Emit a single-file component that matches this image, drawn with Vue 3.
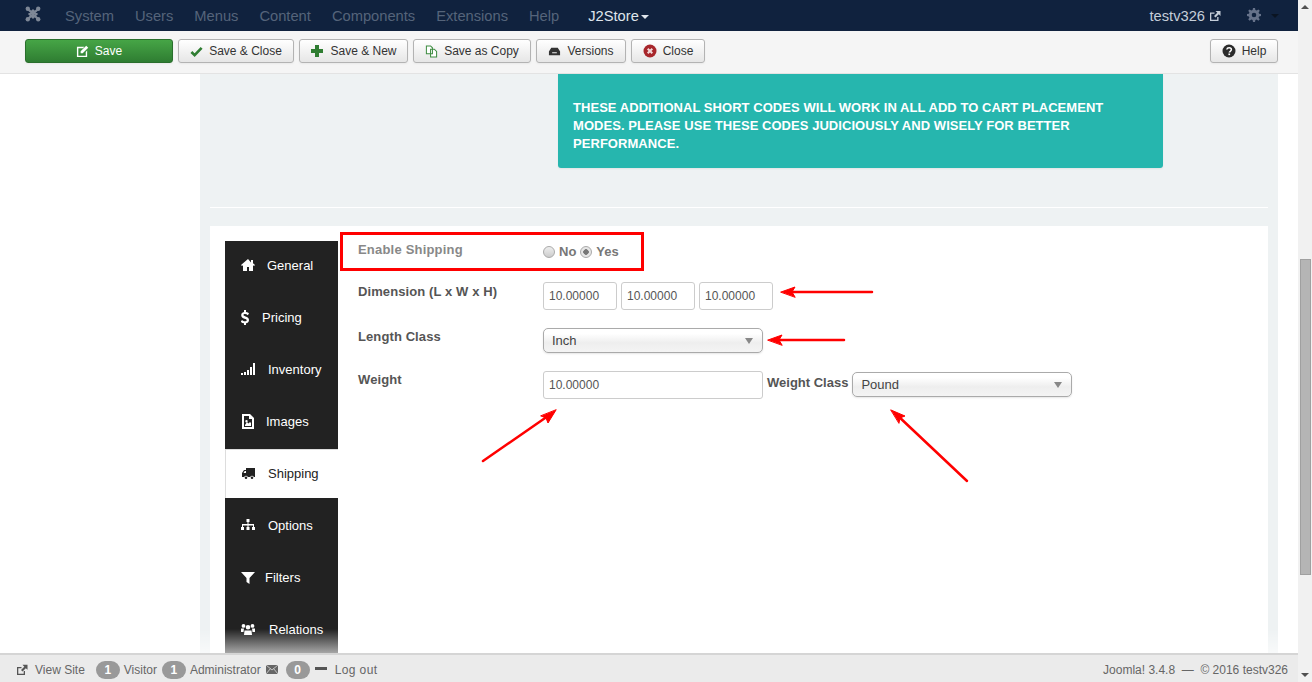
<script setup>
const navItems = ['System', 'Users', 'Menus', 'Content', 'Components', 'Extensions', 'Help'];
const tabs = [
  { label: 'General', icon: 'home', gap: 12 },
  { label: 'Pricing', icon: 'dollar', gap: 7, box: '3 0 14 15' },
  { label: 'Inventory', icon: 'signal', gap: 13 },
  { label: 'Images', icon: 'image', gap: 11 },
  { label: 'Shipping', icon: 'truck', gap: 13, active: true },
  { label: 'Options', icon: 'tree', gap: 13 },
  { label: 'Filters', icon: 'filter', gap: 10 },
  { label: 'Relations', icon: 'users', gap: 14 }
];
const iconPaths = {
  home: 'M7 1 0 7l1 1 1-.8V13h4V9h2v4h4V7.2l1 .8 1-1-2-1.8V2h-2v2.400z',
  dollar: 'M6 0h2v2c1.500.2 2.500.8 3 1.500L9.800 5.200C9 4.400 8 4 7 4c-1 0-1.500.4-1.500 1 0 .7.800 1 2 1.400C9.500 7 11 8 11 10c0 1.800-1.200 3-3 3.300V15H6v-1.700c-1.500-.2-2.700-.9-3.300-1.800l1.300-1.500c.8.800 1.900 1.300 3 1.300 1 0 1.700-.4 1.700-1.100 0-.8-.9-1.100-2.200-1.500C4.600 8.100 3.200 7.200 3.200 5.200 3.200 3.500 4.300 2.300 6 2z',
  signal: 'M0 11h2v2H0zM3 10h2v3H3zM6 8h2v5H6zM9 5h2v8H9zM12 1h2v12h-2z',
  image: 'M1 0h8l4 4v11H1zm2 2v11h8V5H8V2zm1 9 2-3 1.500 1.500L9 8l1 1v3H4zm1.500-5a1.200 1.200 0 1 1 0 2.400 1.200 1.200 0 0 1 0-2.400z',
  truck: 'M5 2h9v9h-1.200a2 2 0 0 0-3.600 0H6.800a2 2 0 0 0-3.600 0H1V7l2-3h2zM2.500 7H5V5H3.700zM5 10.500a1.300 1.300 0 1 1 0 2.600 1.300 1.300 0 0 1 0-2.600zm6 0a1.300 1.300 0 1 1 0 2.600 1.300 1.300 0 0 1 0-2.600z',
  tree: 'M5.500 1h3v3h-1v2H13v3h1v3h-3V9h1V7.500H7.500V9h1v3h-3V9h1V7.500H2V9h1v3H0V9h1V6h5.500V4h-1z',
  filter: 'M0 2h14L8.500 8v6l-3-2V8z',
  users: 'M7 3a2.300 2.300 0 1 1 0 4.600A2.300 2.300 0 0 1 7 3zM2.500 2a1.900 1.900 0 1 1 0 3.800 1.900 1.900 0 0 1 0-3.800zm9 0a1.900 1.900 0 1 1 0 3.800 1.900 1.900 0 0 1 0-3.800zM3.500 8.500h7l.5 4.500H3zM0 6.500h3L2.500 10H0zm11 0h3V10h-2.500z'
};
</script>

<template>
  <div class="page">
    <div class="main">
      <header class="navbar">
        <svg class="joomla" viewBox="0 0 16 16" width="16" height="16">
          <path d="M3 3l10 10M13 3 3 13M8 4.500 4.500 8 8 11.500 11.500 8z" fill="none" stroke="#7d8796" stroke-width="2.200" />
          <circle cx="2.800" cy="2.800" r="2.200" fill="#7d8796" /><circle cx="13.200" cy="2.800" r="2.200" fill="#7d8796" />
          <circle cx="2.800" cy="13.200" r="2.200" fill="#7d8796" /><circle cx="13.200" cy="13.200" r="2.200" fill="#7d8796" />
        </svg>
        <nav class="nav-items">
          <a v-for="item in navItems" :key="item">{{ item }}</a>
        </nav>
        <a class="nav-j2">J2Store<i class="caret"></i></a>
        <span class="nav-site">testv326
          <svg viewBox="0 0 12 12" width="12" height="12"><path d="M1 2.500h4.500v1.300H2.300v5.900h5.900V7h1.300v4H1zM6.500 1H11.500v5L9.800 4.300 6.500 7.600 5 6.100l3.300-3.300z" fill="#c5ced9" /></svg>
        </span>
        <svg class="gear" viewBox="0 0 14 14" width="14" height="14"><path d="M6 0h2l.4 2 1.300.5L11.400 1.400 12.800 2.800 11.600 4.400 12.100 5.700 14 6v2l-1.900.4-.5 1.300 1.200 1.600-1.400 1.400-1.700-1.100-1.300.5L8 14H6l-.4-1.900-1.300-.5-1.700 1.100-1.400-1.400 1.200-1.600-.5-1.300L0 8V6l1.900-.3.500-1.300-1.200-1.600 1.400-1.400 1.700 1.100L5.600 2zM7 4.700a2.300 2.300 0 1 0 0 4.600 2.300 2.300 0 0 0 0-4.600z" fill="#66728a" fill-rule="evenodd" /></svg>
        <i class="caret dark"></i>
      </header>

      <div class="toolbar">
        <button class="btn btn-save">
          <svg viewBox="0 0 14 14" width="13" height="13"><path d="M1 2h8L7.500 3.500h-5v8h8v-4L12 6v7H1zM11 .8 13.200 3l-6 6H5V6.800z" fill="#fff" /></svg>
          Save
        </button>
        <button class="btn btn-close-save">
          <svg viewBox="0 0 14 14" width="13" height="13"><path d="M1.500 7.500 5 11l7.500-8" fill="none" stroke="#2f7d32" stroke-width="2.800" /></svg>
          Save &amp; Close
        </button>
        <button class="btn btn-new">
          <svg viewBox="0 0 14 14" width="14" height="14"><path d="M5 1h4v4h4v4H9v4H5V9H1V5h4z" fill="#2f7d32" /></svg>
          Save &amp; New
        </button>
        <button class="btn btn-copy">
          <svg viewBox="0 0 14 14" width="13" height="13"><path d="M1.500 1h4.500l2 2v6.500H1.500zM6 4.500h4l2.500 2.500v6H6z" fill="#fff" stroke="#3d8c40" stroke-width="1.100" /></svg>
          Save as Copy
        </button>
        <button class="btn btn-versions">
          <svg viewBox="0 0 14 14" width="13" height="13"><path d="M3.500 3h7L13 7v4H1V7zM4.500 7.800v1.200h5V7.800z" fill="#333" fill-rule="evenodd" /></svg>
          Versions
        </button>
        <button class="btn btn-close">
          <svg viewBox="0 0 14 14" width="14" height="14"><circle cx="7" cy="7" r="6.500" fill="#a8272c" /><path d="m4.700 4.700 4.600 4.600m0-4.600-4.600 4.600" stroke="#f3d9d9" stroke-width="2" /></svg>
          Close
        </button>
        <button class="btn btn-help">
          <svg viewBox="0 0 14 14" width="14" height="14"><circle cx="7" cy="7" r="6.500" fill="#2b2b2b" /><path d="M4.800 5.500C5 4.200 6 3.700 7.100 3.700c1.300 0 2.300.7 2.300 1.900 0 1.700-2.100 1.600-2.100 3" fill="none" stroke="#fff" stroke-width="1.500" /><rect x="6.400" y="9.500" width="1.700" height="1.600" fill="#fff" /></svg>
          Help
        </button>
      </div>

      <div class="content">
        <div class="panel">
          <div class="notice">
            THESE ADDITIONAL SHORT CODES WILL WORK IN ALL ADD TO CART PLACEMENT MODES. PLEASE USE THESE CODES JUDICIOUSLY AND WISELY FOR BETTER PERFORMANCE.
          </div>
          <hr class="divider" />
          <div class="card">
            <ul class="tabs">
              <li v-for="tab in tabs" :key="tab.label" :class="{ active: tab.active }" :style="{ gap: tab.gap + 'px' }">
                <svg :viewBox="tab.box || '0 0 14 15'" width="14" height="15"><path :d="iconPaths[tab.icon]" fill="currentColor" fill-rule="evenodd" /></svg>
                {{ tab.label }}
              </li>
            </ul>
            <div class="form">
              <div class="row row-enable">
                <label class="muted">Enable Shipping</label>
                <span class="radios">
                  <i class="radio"></i><b>No</b>
                  <i class="radio checked"></i><b>Yes</b>
                </span>
              </div>
              <div class="row row-dim">
                <label>Dimension (L x W x H)</label>
                <input class="input small" value="10.00000" />
                <input class="input small" value="10.00000" />
                <input class="input small" value="10.00000" />
              </div>
              <div class="row row-length">
                <label>Length Class</label>
                <div class="select">Inch<i class="select-arrow"></i></div>
              </div>
              <div class="row row-weight">
                <label>Weight</label>
                <input class="input wide" value="10.00000" />
                <label class="inline">Weight Class</label>
                <div class="select">Pound<i class="select-arrow"></i></div>
              </div>
            </div>
          </div>
        </div>
        <div class="fade"></div>
      </div>

      <footer class="status">
        <svg viewBox="0 0 12 12" width="12" height="12"><path d="M1 3h4.500v1.300H2.300v5.400h5.400V7H9v4H1zM6.500 .8H11.500v5L9.800 4.200 6.500 7.500 5 6l3.300-3.300z" fill="#555" /></svg>
        <span class="s-view">View Site</span>
        <span class="badge">1</span><span class="s-text">Visitor</span>
        <span class="badge">1</span><span class="s-text">Administrator</span>
        <svg class="mail" viewBox="0 0 12 9" width="12" height="9"><path d="M0 0h12v9H0z" fill="#666" /><path d="m0 0 6 5 6-5M0 9l4.500-5.500M12 9 7.500 3.500" fill="none" stroke="#ddd" stroke-width=".8" /></svg>
        <span class="badge">0</span>
        <i class="minus"></i>
        <span class="s-logout">Log out</span>
        <span class="s-right">Joomla! 3.4.8 &nbsp;—&nbsp; © 2016 testv326</span>
      </footer>
    </div>

    <div class="scrollbar">
      <i class="sb-up"></i>
      <div class="sb-track"><div class="sb-thumb"></div></div>
      <i class="sb-down"></i>
    </div>

    <svg class="annotations" width="1312" height="682" viewBox="0 0 1312 682">
      <rect x="341.500" y="233.500" width="301" height="36" fill="none" stroke="#f00" stroke-width="3" />
      <g fill="#f00" stroke="#f00" stroke-linecap="round">
        <path d="M790 292h82" stroke-width="2.500" /><path d="m781 292 14-5-3 5 3 5z" />
        <path d="M777 340h67" stroke-width="2.500" /><path d="m768 340 14-5-3 5 3 5z" />
        <path d="m483 461 65-45" stroke-width="2.500" /><path d="m556 410-8 13-2-5-5-2z" />
        <path d="m967 481-70-66" stroke-width="2.500" /><path d="m891 410 14 6-5 2-1 5z" />
      </g>
    </svg>
  </div>
</template>

<style scoped>
.page {
  position: relative;
  display: flex;
  width: 1312px;
  height: 682px;
  overflow: hidden;
  font-family: "Liberation Sans", Arial, sans-serif;
  font-size: 13px;
  color: #555;
  background: #fff;
}

.main {
  display: flex;
  flex-direction: column;
  width: 1298px;
}

.navbar {
  display: flex;
  align-items: center;
  flex: 0 0 31px;
  padding-left: 25px;
  background: #10223e;
  font-size: 14.700px;
}

.joomla {
  margin-top: -3px;
}

.nav-items {
  display: flex;
  gap: 21px;
  margin-left: 24px;
}

.nav-items a {
  color: #55647a;
}

.nav-j2 {
  margin-left: 29px;
  color: #dfe5ec;
}

.caret {
  display: inline-block;
  margin-left: 2px;
  vertical-align: middle;
  border: 4px solid transparent;
  border-top-color: #dfe5ec;
  border-bottom-width: 0;
}

.caret.dark {
  margin-left: 10px;
  margin-right: 19px;
  border-top-color: #0a1422;
}

.nav-site {
  display: flex;
  align-items: center;
  gap: 4px;
  margin-left: auto;
  margin-right: 26px;
  color: #c5ced9;
}

.gear {
  margin-top: -2px;
}

.toolbar {
  display: flex;
  align-items: center;
  flex: 0 0 43px;
  gap: 5px;
  padding: 0 20px 2px 25px;
  background: #f5f5f5;
  border-bottom: 1px solid #e3e3e3;
  box-sizing: border-box;
}

.btn {
  display: flex;
  align-items: center;
  justify-content: center;
  gap: 6px;
  box-sizing: border-box;
  height: 24px;
  padding: 0;
  font-family: inherit;
  font-size: 12px;
  color: #333;
  background: linear-gradient(#fff, #e6e6e6);
  border: 1px solid #b3b3b3;
  border-radius: 3px;
  box-shadow: 0 1px 2px rgba(0, 0, 0, .05);
}

.btn-save {
  width: 148px;
  color: #fff;
  background: linear-gradient(#46a546, #2f7d32);
  border-color: #2a6f2d;
}

.btn-close-save {
  width: 116px;
}

.btn-new {
  width: 109px;
}

.btn-copy {
  width: 118px;
}

.btn-versions {
  width: 90px;
}

.btn-close {
  width: 74px;
}

.btn-help {
  width: 68px;
  margin-left: auto;
}

.content {
  position: relative;
  flex: 1;
  min-height: 0;
  overflow: hidden;
  padding: 0 20px 0 200px;
}

.panel {
  height: 100%;
  padding: 0 10px;
  background: #eef2f3;
}

.notice {
  box-sizing: border-box;
  width: 605px;
  height: 94px;
  margin-left: 348px;
  padding: 25px 15px 0;
  font-weight: bold;
  line-height: 18px;
  letter-spacing: .05px;
  color: #fff;
  background: #26b6ae;
  border-radius: 0 0 3px 3px;
  box-shadow: 0 1px 2px rgba(0, 0, 0, .06);
}

.divider {
  height: 1px;
  margin: 39px 0 18px;
  border: 0;
  background: #fff;
}

.card {
  display: flex;
  height: 500px;
  padding: 15px 0 0 15px;
  background: #fff;
}

.tabs {
  flex: 0 0 113px;
  height: 420px;
  margin: 0;
  padding: 0;
  list-style: none;
  background: #222;
}

.tabs li {
  display: flex;
  align-items: center;
  box-sizing: border-box;
  height: 52px;
  padding: 0 0 4px 16px;
  color: #fff;
}

.tabs li.active {
  height: 49px;
  margin-bottom: 3px;
  padding: 0 0 1px 15px;
  color: #222;
  background: #fff;
  border-top: 1px solid #ddd;
  border-left: 1px solid #ddd;
}

.form {
  flex: 1;
  padding-left: 20px;
}

.row {
  display: flex;
  align-items: flex-start;
}

.row label {
  flex: 0 0 185px;
  font-weight: bold;
  letter-spacing: .1px;
}

.row label.inline {
  flex: none;
  margin: 4px 4px 0;
  letter-spacing: 0;
}

.row label.muted {
  color: #888;
  letter-spacing: .2px;
}

.row-enable {
  height: 40px;
  padding-top: 1px;
}

.radios {
  display: flex;
  align-items: center;
  gap: 4px;
  height: 19px;
  color: #777;
}

.radio {
  box-sizing: border-box;
  width: 12px;
  height: 12px;
  background: linear-gradient(#eee, #ccc);
  border: 1px solid #aaa;
  border-radius: 50%;
}

.radio.checked {
  background: radial-gradient(#777 0 2.500px, #e6e6e6 3px);
}

.row-dim {
  height: 46px;
}

.row-dim label {
  padding-top: 2px;
}

.row-length {
  height: 43px;
}

.row-length label {
  padding-top: 1px;
}

.row-weight label:first-child {
  padding-top: 1px;
}

.input {
  box-sizing: border-box;
  height: 28px;
  padding: 0 5px;
  font-family: inherit;
  font-size: 12px;
  color: #555;
  background: #fff;
  border: 1px solid #ccc;
  border-radius: 3px;
  outline: none;
}

.input.small {
  width: 74px;
  margin-right: 4px;
}

.input.wide {
  width: 220px;
}

.select {
  position: relative;
  box-sizing: border-box;
  width: 220px;
  height: 25px;
  padding: 0 8px;
  line-height: 24px;
  color: #444;
  background: linear-gradient(#fff 0 20%, #eee 60%, #f4f4f4);
  border: 1px solid #aaa;
  border-radius: 5px;
  box-shadow: 0 1px 2px rgba(0, 0, 0, .1);
}

.row-weight .select {
  margin-top: 1px;
}

.select-arrow {
  position: absolute;
  top: 9px;
  right: 9px;
  border: 4px solid transparent;
  border-top: 6px solid #888;
  border-bottom-width: 0;
}

.fade {
  position: absolute;
  left: 0;
  right: 0;
  bottom: 0;
  height: 24px;
  background: linear-gradient(rgba(255, 255, 255, 0), rgba(255, 255, 255, .6));
}

.status {
  display: flex;
  align-items: center;
  flex: 0 0 29px;
  box-sizing: border-box;
  padding: 2px 10px 0 16px;
  font-size: 12px;
  color: #666;
  background: #ebebeb;
  border-top: 2px solid #d5d5d5;
}

.s-view {
  margin: 0 11px 0 7px;
}

.badge {
  width: 24px;
  height: 18px;
  font-weight: bold;
  line-height: 18px;
  text-align: center;
  color: #fff;
  background: #999;
  border-radius: 9px;
}

.s-text {
  margin: 0 5px 0 4px;
}

.mail {
  margin-right: 8px;
}

.minus {
  width: 12px;
  height: 3px;
  margin: 0 8px 3px 5px;
  background: #555;
}

.s-logout {
  letter-spacing: .4px;
}

.s-right {
  margin-left: auto;
}

.scrollbar {
  display: flex;
  flex-direction: column;
  width: 14px;
  background: #f1f1f1;
}

.sb-track {
  flex: 1;
  padding-top: 245px;
}

.sb-thumb {
  box-sizing: border-box;
  height: 316px;
  margin: 0 1px 0 2px;
  background: #b5b5b5;
  border: 1px solid #a0a0a0;
}

.sb-up,
.sb-down {
  align-self: center;
  margin: 5px 0;
  border: 4px solid transparent;
  border-bottom: 4px solid #505050;
  border-top-width: 0;
}

.sb-down {
  border-top: 4px solid #505050;
  border-bottom-width: 0;
}

.annotations {
  position: absolute;
  top: 0;
  left: 0;
  pointer-events: none;
}
</style>
